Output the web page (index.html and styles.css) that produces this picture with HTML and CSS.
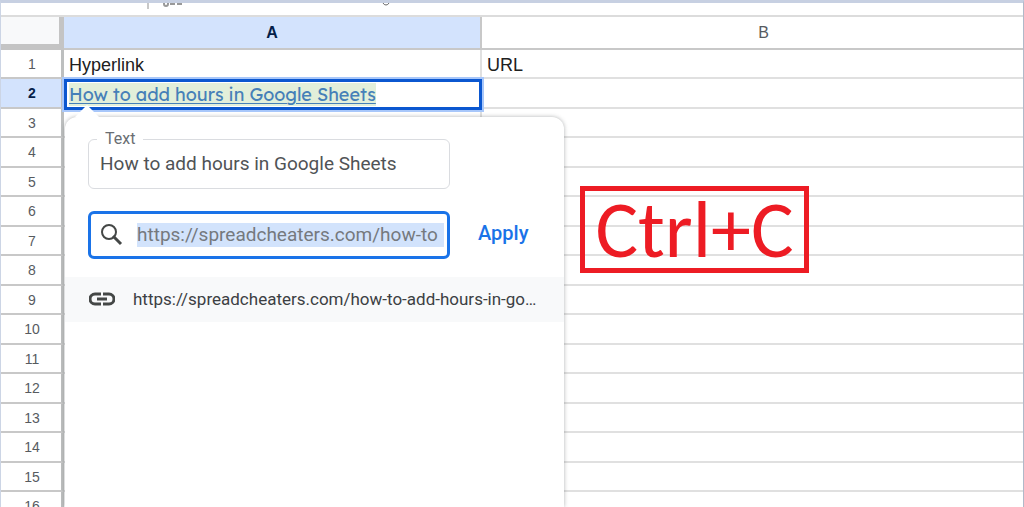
FILE: index.html
```
<!DOCTYPE html>
<html lang="en">
<head>
    <meta charset="UTF-8">
    <meta name="viewport" content="width=device-width, initial-scale=1.0">
    <title>Google Sheets - Hyperlink</title>
    <link rel="stylesheet" href="styles.css">
</head>
<body>
    <div class="window">
        <!-- Bottom edge of the formula bar -->
        <div class="toolbar">
            <span class="separator"></span>
            <svg class="fx" width="22" height="6" viewBox="0 0 22 6" aria-hidden="true">
                <path d="M2 0v1q0 2 2 2t2-2V0M8 1h5M15 1h5" fill="none" stroke="#999" stroke-width="2"/>
            </svg>
            <svg class="tail" width="10" height="4" viewBox="0 0 10 4" aria-hidden="true">
                <path d="M2 0q1 2 3 2t3-2" fill="none" stroke="#666" stroke-width="1"/>
            </svg>
        </div>

        <table class="sheet">
            <thead>
                <tr>
                    <th class="corner"></th>
                    <th class="col-a active">A</th>
                    <th class="col-b">B</th>
                </tr>
            </thead>
            <tbody>
                <tr><th>1</th><td>Hyperlink</td><td>URL</td></tr>
                <tr><th class="active">2</th><td class="selected"><a href="#">How to add hours in Google Sheets</a></td><td></td></tr>
                <tr><th>3</th><td></td><td></td></tr>
                <tr><th>4</th><td></td><td></td></tr>
                <tr><th>5</th><td></td><td></td></tr>
                <tr><th>6</th><td></td><td></td></tr>
                <tr><th>7</th><td></td><td></td></tr>
                <tr><th>8</th><td></td><td></td></tr>
                <tr><th>9</th><td></td><td></td></tr>
                <tr><th>10</th><td></td><td></td></tr>
                <tr><th>11</th><td></td><td></td></tr>
                <tr><th>12</th><td></td><td></td></tr>
                <tr><th>13</th><td></td><td></td></tr>
                <tr><th>14</th><td></td><td></td></tr>
                <tr><th>15</th><td></td><td></td></tr>
                <tr><th>16</th><td></td><td></td></tr>
            </tbody>
        </table>

        <form class="popup">
            <div class="text-field">
                <label for="link-text">Text</label>
                <input type="text" id="link-text" value="How to add hours in Google Sheets">
            </div>
            <div class="url-row">
                <div class="url-field">
                    <svg width="24" height="24" viewBox="0 0 24 24" aria-hidden="true">
                        <circle cx="9" cy="9" r="7" fill="none" stroke="#444746" stroke-width="2"/>
                        <path d="M13 13l8 8" fill="none" stroke="#444746" stroke-width="3"/>
                    </svg>
                    <input type="text" aria-label="Link" value="https://spreadcheaters.com/how-to">
                </div>
                <button type="button">Apply</button>
            </div>
            <a class="suggestion" href="#">
                <svg width="26" height="14" viewBox="0 0 26 14" aria-hidden="true">
                    <path d="M12 2H6a5 5 0 0 0 0 10h6M14 2h6a5 5 0 0 1 0 10h-6M8 7h10" fill="none" stroke="#444746" stroke-width="3"/>
                </svg>
                <span>https://spreadcheaters.com/how-to-add-hours-in-go…</span>
            </a>
        </form>

        <div class="shortcut">Ctrl+C</div>
    </div>
</body>
</html>
```
FILE: styles.css
```
* {
  box-sizing: border-box;
}

body {
  margin: 0;
  background: #fff;
  font-family: "Liberation Sans", Arial, sans-serif;
}

.window {
  position: relative;
  height: 100vh;
  overflow: hidden;
  border-top: 3px solid #c7d0e2;
  border-left: 1px solid #ccd5e5;
  border-right: 1px solid #b0b9c9;
}

/* Formula bar */
.toolbar {
  display: flex;
  align-items: flex-start;
  height: 14px;
  padding-left: 146px;
  border-bottom: 2px solid #dcdcdc;
}

.separator {
  width: 2px;
  height: 6px;
  background: #c8c8c8;
}

.fx {
  margin-left: 13px;
}

.tail {
  margin-left: 197px;
}

/* Spreadsheet grid */
.sheet {
  width: 100%;
  table-layout: fixed;
  border-spacing: 0;
}

.sheet th,
.sheet td {
  height: 30px;
  padding: 0;
  border-bottom: 2px solid #e0e0e0;
  border-right: 2px solid #e0e0e0;
}

.sheet tbody tr:nth-child(odd) > * {
  height: 29px;
}

.sheet th {
  color: #575b5f;
  font-size: 14px;
  font-weight: normal;
  line-height: 16px;
  border-color: #c8c8c8;
}

.sheet tbody th {
  padding-left: 2px;
  border-right: 3px solid #bdbfbf;
}

.sheet thead th {
  height: 33px;
  font-size: 16px;
}

.sheet .corner {
  width: 63px;
  background: #f8f9fa;
  border-right: 5px solid #c4c4c4;
  border-bottom: 6px solid #c4c4c4;
}

.sheet .col-a {
  width: 418px;
}

/* the column runs on past the right edge of the window */
.sheet .col-b {
  padding-left: 22px;
}

.sheet th.active {
  background: #d3e3fd;
  color: #041e49;
  font-weight: bold;
}

.sheet td {
  padding: 3px 0 0 5px;
  color: #202020;
  font-size: 18px;
  line-height: 20px;
}

.sheet tr > :last-child {
  border-right: 0;
}

.sheet .selected {
  position: relative;
}

.selected::after {
  content: "";
  position: absolute;
  inset: 0 -2px -3px 0;
  border: 3px solid #0b57d0;
  box-shadow: 0 0 0 2px #a8c7fa;
}

.selected a {
  background: #e2efda;
  color: #4680b8;
  font-family: Lexend, Inter, sans-serif;
  text-decoration-thickness: 1px;
  text-underline-offset: 2px;
}

/* Link editor */
.popup {
  position: absolute;
  top: 114px;
  bottom: 0;
  left: 64px;
  width: 499px;
  padding-top: 22px;
  background: #fff;
  border-radius: 12px 12px 0 0;
  box-shadow: 0 0 4px rgba(60, 64, 67, 0.4);
  font-family: Roboto, sans-serif;
}

.popup::before {
  content: "";
  position: absolute;
  top: -12px;
  left: 10px;
  border: 12px solid transparent;
  border-top: 0;
  border-bottom-color: #fff;
}

.popup input {
  min-width: 0;
  padding: 0;
  border: 0;
  outline: 0;
  background: none;
  color: #505356;
  font: 19px/24px Roboto, sans-serif;
}

.text-field {
  position: relative;
  display: flex;
  width: 362px;
  height: 50px;
  margin-left: 23px;
  padding: 0 11px;
  border: 1px solid #dadce0;
  border-radius: 6px;
}

.text-field label {
  position: absolute;
  top: -11px;
  left: 8px;
  padding: 0 8px;
  background: #fff;
  color: #6a6e73;
  font-size: 16px;
  line-height: 20px;
}

.text-field input {
  flex: 1;
}

.url-row {
  display: flex;
  align-items: center;
  gap: 28px;
  margin: 22px 0 18px 23px;
}

.url-field {
  display: flex;
  align-items: center;
  gap: 13px;
  width: 362px;
  height: 48px;
  padding: 0 3px 0 9px;
  border: 3px solid #1a73e8;
  border-radius: 6px;
}

.popup .url-field input {
  flex: 1;
  background: #d2e3fc;
  color: #75797e;
}

.url-row button {
  padding: 0 0 4px;
  border: 0;
  background: none;
  color: #1a73e8;
  font: 500 20px/24px Roboto, sans-serif;
}

.suggestion {
  display: flex;
  align-items: center;
  gap: 18px;
  height: 45px;
  padding: 0 12px 2px 24px;
  background: #f8f9fa;
  color: #3c4043;
  font-size: 17px;
  text-decoration: none;
  white-space: nowrap;
}

.suggestion svg {
  flex: none;
}

/* Shortcut callout */
.shortcut {
  position: absolute;
  top: 183px;
  left: 579px;
  width: 229px;
  border: 5px solid #ed1c24;
  color: #ed1c24;
  font: 80px/77px Calibri, Carlito, Lato, sans-serif;
  text-align: center;
}
```
